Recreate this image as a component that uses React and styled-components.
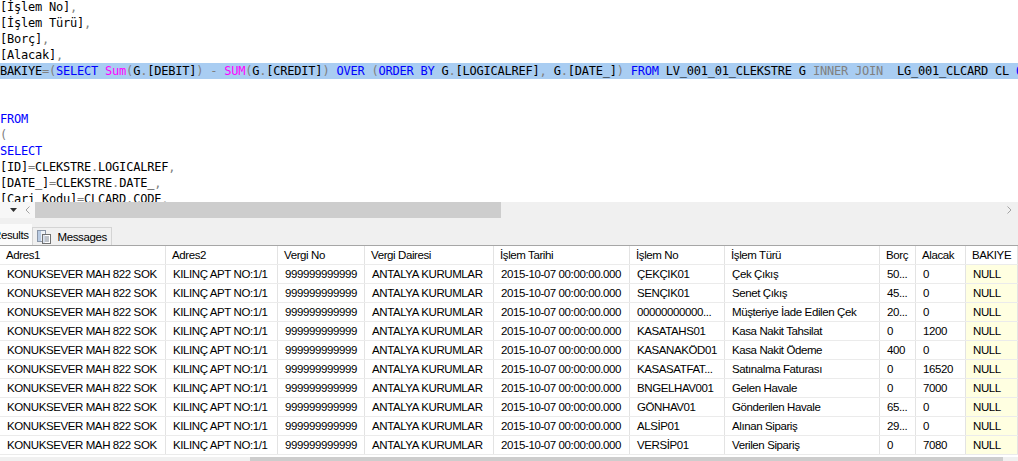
import React from 'react';
import styled, { createGlobalStyle } from 'styled-components';

const Global = createGlobalStyle`
  html, body { margin: 0; padding: 0; background: #fff; overflow: hidden; }
  #root { width: 1018px; height: 461px; }
`;

const Page = styled.div`
  width: 1018px;
  height: 461px;
  overflow: hidden;
  display: flex;
  flex-direction: column;
  background: #fff;
`;

/* ---------- SQL editor ---------- */
const Editor = styled.div`
  flex: none;
  height: 202px;
  overflow: hidden;
  background: #fff;
`;

const Code = styled.div`
  margin: -1px 0 0 0;
  font-family: "DejaVu Sans Mono", "Liberation Mono", monospace;
  font-size: 12px;
  letter-spacing: -0.22px;
  line-height: 16px;
  white-space: pre;
  color: #000;
`;

const Line = styled.div`
  height: 16px;
  background: ${p => (p.$selected ? '#a9cdf2' : 'transparent')};
`;

const TOKEN_COLORS = { k: '#0000ff', f: '#ff00ff', o: '#808080', t: '#000' };
const Tok = styled.span`
  color: ${p => TOKEN_COLORS[p.$type] || '#000'};
`;

const L = (...pairs) => pairs;
const codeLines = [
  { t: L(['[İşlem No]', 't'], [',', 'o']) },
  { t: L(['[İşlem Türü]', 't'], [',', 'o']) },
  { t: L(['[Borç]', 't'], [',', 'o']) },
  { t: L(['[Alacak]', 't'], [',', 'o']) },
  {
    sel: true,
    t: L(
      ['BAKIYE', 't'], ['=(', 'o'], ['SELECT', 'k'], [' ', 't'], ['Sum', 'f'], ['(', 'o'],
      ['G', 't'], ['.', 'o'], ['[DEBIT]', 't'], [')', 'o'], [' ', 't'], ['-', 'o'], [' ', 't'],
      ['SUM', 'f'], ['(', 'o'], ['G', 't'], ['.', 'o'], ['[CREDIT]', 't'], [')', 'o'], [' ', 't'],
      ['OVER', 'k'], [' ', 't'], ['(', 'o'], ['ORDER BY', 'k'], [' G', 't'], ['.', 'o'],
      ['[LOGICALREF]', 't'], [',', 'o'], [' G', 't'], ['.', 'o'], ['[DATE_]', 't'], [')', 'o'],
      [' ', 't'], ['FROM', 'k'], [' LV_001_01_CLEKSTRE G ', 't'], ['INNER JOIN', 'o'],
      ['  LG_001_CLCARD CL ', 't'], ['ON', 'k']
    ),
  },
  { t: L() },
  { t: L() },
  { t: L(['FROM', 'k']) },
  { t: L(['(', 'o']) },
  { t: L(['SELECT', 'k']) },
  { t: L(['[ID]', 't'], ['=', 'o'], ['CLEKSTRE', 't'], ['.', 'o'], ['LOGICALREF', 't'], [',', 'o']) },
  { t: L(['[DATE_]', 't'], ['=', 'o'], ['CLEKSTRE', 't'], ['.', 'o'], ['DATE_', 't'], [',', 'o']) },
  { t: L(['[Cari Kodu]', 't'], ['=', 'o'], ['CLCARD', 't'], ['.', 'o'], ['CODE', 't'], [',', 'o']) },
];

/* ---------- scrollbars ---------- */
const HScroll = styled.div`
  flex: none;
  display: flex;
  height: 16px;
  background: #f0f0f0;
`;

const ZoomBox = styled.div`
  width: 20px;
  display: flex;
  align-items: center;
  justify-content: flex-end;
  padding-right: 3px;
  box-sizing: border-box;
  background: #f7f7f7;
`;

const ArrowBtn = styled.div`
  width: ${p => p.$w || 15}px;
  display: flex;
  align-items: center;
  justify-content: center;
  background: ${p => p.$bg || '#f0f0f0'};
`;

const Thumb = styled.div`
  width: ${p => p.$w}px;
  background: #cdcdcd;
`;

const Track = styled.div`
  flex: ${p => (p.$w ? 'none' : '1')};
  width: ${p => (p.$w ? `${p.$w}px` : 'auto')};
  background: #f0f0f0;
`;

/* ---------- result tabs ---------- */
const TabStrip = styled.div`
  flex: none;
  height: 27px;
  background: #f0f0f0;
  display: flex;
  align-items: flex-end;
  overflow: hidden;
`;

const Tabs = styled.div`
  display: flex;
  align-items: flex-end;
  margin-left: -34px;
`;

const Tab = styled.div`
  display: flex;
  align-items: center;
  gap: ${p => (p.$active ? 4 : 6)}px;
  box-sizing: border-box;
  height: ${p => (p.$active ? 21 : 18)}px;
  padding: ${p => (p.$active ? '0 2px 0 6px' : '0 4px 0 3px')};
  background: ${p => (p.$active ? '#fbfbfb' : '#f0f0f0')};
  border: 1px solid ${p => (p.$active ? '#fbfbfb' : '#d4d4d4')};
  border-bottom: none;
  font-family: "Liberation Sans", Arial, sans-serif;
  font-size: 11.5px;
  letter-spacing: -0.4px;
  color: #000;
  white-space: nowrap;
`;

/* ---------- results grid ---------- */
const COLS = '166px 112px 87px 129px 136px 95px 155px 36px 50px 52px';

const Grid = styled.div`
  flex: none;
  border-top: 1px solid #a6a6a6;
  font-family: "Liberation Sans", Arial, sans-serif;
  font-size: 11.5px;
  letter-spacing: -0.4px;
  color: #000;
`;

const Row = styled.div`
  display: grid;
  grid-template-columns: ${COLS};
  height: 19px;
  box-sizing: border-box;
  border-bottom: 1px solid #ebebeb;
`;

const Cell = styled.div`
  box-sizing: border-box;
  border-right: 1px solid #e3e3e3;
  padding-left: ${p => (p.$head ? 6 : 7)}px;
  line-height: 18px;
  white-space: nowrap;
  overflow: hidden;
  background: ${p => (p.$null ? '#ffffe1' : '#fff')};
`;

const BottomScroll = styled.div`
  flex: none;
  display: flex;
  height: 17px;
  margin-top: 2px;
  background: #f0f0f0;
`;

const headers = ['Adres1', 'Adres2', 'Vergi No', 'Vergi Dairesi', 'İşlem Tarihi', 'İşlem No', 'İşlem Türü', 'Borç', 'Alacak', 'BAKIYE'];

const rows = [
  ['ÇEKÇIK01', 'Çek Çıkış', '50...', '0'],
  ['SENÇIK01', 'Senet Çıkış', '45...', '0'],
  ['00000000000...', 'Müşteriye İade Edilen Çek', '20...', '0'],
  ['KASATAHS01', 'Kasa Nakit Tahsilat', '0', '1200'],
  ['KASANAKÖD01', 'Kasa Nakit Ödeme', '400', '0'],
  ['KASASATFAT...', 'Satınalma Faturası', '0', '16520'],
  ['BNGELHAV001', 'Gelen Havale', '0', '7000'],
  ['GÖNHAV01', 'Gönderilen Havale', '65...', '0'],
  ['ALSİP01', 'Alınan Sipariş', '29...', '0'],
  ['VERSİP01', 'Verilen Sipariş', '0', '7080'],
];

const DropIcon = () => (
  <svg width="7" height="4" viewBox="0 0 7 4">
    <polygon points="0,0 7,0 3.5,4" fill="#303030" />
  </svg>
);

const Chevron = ({ dir }) => (
  <svg width="5" height="8" viewBox="0 0 5 8">
    <polyline
      points={dir === 'left' ? '4.5,0.5 1,4 4.5,7.5' : '0.5,0.5 4,4 0.5,7.5'}
      fill="none"
      stroke="#a3a3a3"
      strokeWidth="1"
    />
  </svg>
);

const GridIcon = () => (
  <svg width="16" height="16" viewBox="0 0 16 16">
    <rect x="1.5" y="2.5" width="13" height="11" fill="#fff" stroke="#6d7f99" />
    <rect x="2" y="3" width="12" height="2.5" fill="#8fb1dc" />
    <line x1="1.5" y1="8.5" x2="14.5" y2="8.5" stroke="#9aa8bb" />
    <line x1="1.5" y1="11" x2="14.5" y2="11" stroke="#9aa8bb" />
    <line x1="6.5" y1="5.5" x2="6.5" y2="13.5" stroke="#9aa8bb" />
  </svg>
);

const MessagesIcon = () => (
  <svg width="16" height="16" viewBox="0 0 16 16">
    <rect x="1.5" y="1.5" width="8" height="11" fill="#eef2f7" stroke="#8a96a8" />
    <rect x="2" y="2" width="3" height="10" fill="#b9cbe3" />
    <rect x="6.5" y="5.5" width="8" height="9" fill="#fff" stroke="#707070" />
    <line x1="8" y1="8" x2="13" y2="8" stroke="#7f8794" />
    <line x1="8" y1="10" x2="13" y2="10" stroke="#7f8794" />
    <line x1="8" y1="12" x2="13" y2="12" stroke="#7f8794" />
    <rect x="7" y="6" width="2" height="8" fill="#d2dceb" opacity="0.8" />
  </svg>
);

export default function App() {
  return (
    <>
      <Global />
      <Page>
        <Editor>
          <Code>
            {codeLines.map((ln, i) => (
              <Line key={i} $selected={ln.sel}>
                {ln.t.map(([text, type], j) => (
                  <Tok key={j} $type={type}>{text}</Tok>
                ))}
                {ln.t.length === 0 ? ' ' : null}
              </Line>
            ))}
          </Code>
        </Editor>

        <HScroll>
          <ZoomBox><DropIcon /></ZoomBox>
          <ArrowBtn $bg="#f7f7f7"><Chevron dir="left" /></ArrowBtn>
          <Thumb $w={466} />
          <Track />
          <ArrowBtn $w={17}><Chevron dir="right" /></ArrowBtn>
        </HScroll>

        <TabStrip>
          <Tabs>
            <Tab $active><GridIcon />Results</Tab>
            <Tab><MessagesIcon />Messages</Tab>
          </Tabs>
        </TabStrip>

        <Grid>
          <Row>
            {headers.map(h => (
              <Cell key={h} $head>{h}</Cell>
            ))}
          </Row>
          {rows.map((r, i) => (
            <Row key={i}>
              <Cell>KONUKSEVER MAH 822 SOK</Cell>
              <Cell>KILINÇ APT NO:1/1</Cell>
              <Cell>999999999999</Cell>
              <Cell>ANTALYA KURUMLAR</Cell>
              <Cell>2015-10-07 00:00:00.000</Cell>
              <Cell>{r[0]}</Cell>
              <Cell>{r[1]}</Cell>
              <Cell>{r[2]}</Cell>
              <Cell>{r[3]}</Cell>
              <Cell $null>NULL</Cell>
            </Row>
          ))}
        </Grid>

        <BottomScroll>
          <Track $w={250} />
          <Thumb $w={753} />
          <Track />
        </BottomScroll>
      </Page>
    </>
  );
}
